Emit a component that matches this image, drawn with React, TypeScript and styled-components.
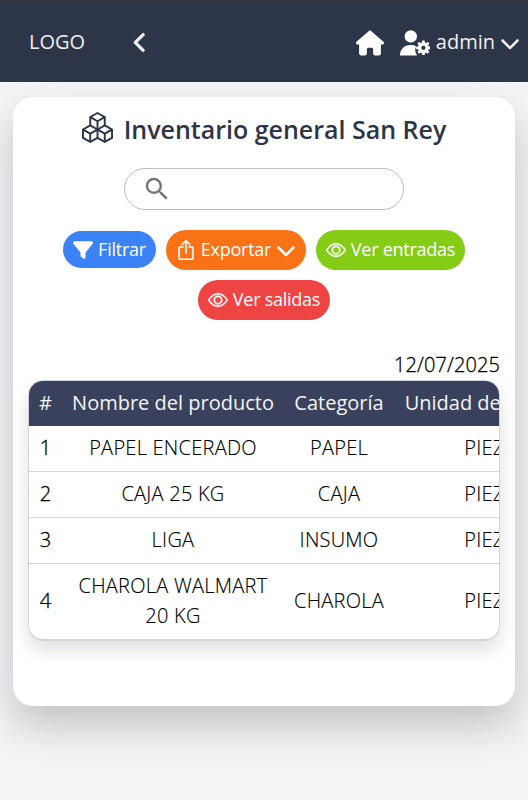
import React from "react";
import styled, { createGlobalStyle } from "styled-components";
import { FaChevronDown, FaChevronLeft, FaFilter, FaHouse } from "react-icons/fa6";
import { BsBoxArrowUp, BsBoxes, BsEye } from "react-icons/bs";
import { MdSearch } from "react-icons/md";

const GlobalStyle = createGlobalStyle`
  * { box-sizing: border-box; }
  body {
    margin: 0;
    background: #f3f4f6;
    font-family: "Open Sans", "Noto Sans", sans-serif;
    font-size: 20px;
    line-height: 30px;
    color: #000;
  }
  svg { display: block; flex: none; }
`;

const Page = styled.div`
  height: 800px;
  overflow: hidden;
`;

const Header = styled.header`
  display: flex;
  align-items: center;
  height: 82px;
  padding: 2px 8px 0 29px;
  border-top: 1px solid #3a3a3a;
  background: #2d3548;
  color: #f0f0f0;
`;

const Logo = styled.span`
  width: 101px;
  padding-bottom: 2px;
`;

const HeaderActions = styled.div`
  display: flex;
  align-items: center;
  margin-left: auto;
`;

const HomeLink = styled.a`
  margin-right: 16px;
  color: #fff;
`;

const UserMenu = styled.button`
  display: flex;
  align-items: center;
  padding: 0;
  border: 0;
  background: none;
  color: inherit;
  font: inherit;
`;

const UserName = styled.span`
  margin: 0 5px 0 6px;
  padding-bottom: 2px;
`;

const Card = styled.main`
  display: flex;
  flex-direction: column;
  align-items: center;
  height: 609px;
  margin: 15px 13px 0;
  padding: 12px 15px 0;
  border-radius: 20px;
  background: #fff;
  box-shadow: 0 20px 40px rgba(0, 0, 0, 0.2);
`;

const TitleRow = styled.div`
  display: flex;
  align-items: center;
  gap: 11px;
  height: 36px;
  color: #2d3548;
`;

const Title = styled.h1`
  margin: 0;
  padding-top: 4px;
  font-size: 25px;
  font-weight: 600;
  line-height: 36px;
`;

const SearchBox = styled.label`
  display: flex;
  align-items: center;
  width: 280px;
  height: 42px;
  margin-top: 23px;
  padding-left: 17px;
  border: 1px solid #bdbdbd;
  border-radius: 21px;
  color: #757575;
`;

const SearchInput = styled.input`
  flex: 1;
  min-width: 0;
  margin-right: 20px;
  border: 0;
  outline: 0;
  background: transparent;
  font: inherit;
`;

const Actions = styled.div`
  display: flex;
  flex-wrap: wrap;
  align-items: center;
  justify-content: center;
  gap: 10px;
  margin-top: 20px;
`;

const ActionButton = styled.button<{ $color: string; $width: number; $compact?: boolean }>`
  display: flex;
  align-items: center;
  justify-content: center;
  gap: 5px;
  width: ${(p) => p.$width}px;
  height: ${(p) => (p.$compact ? 37 : 40)}px;
  margin: ${(p) => (p.$compact ? "0 0 1px" : "0")};
  padding: ${(p) => (p.$compact ? "0" : "0 0 1px")};
  border: 0;
  border-radius: 20px;
  background: ${(p) => p.$color};
  color: #fff;
  font: 400 18px/27px "Open Sans", sans-serif;
  letter-spacing: -0.25px;
  white-space: nowrap;
`;

const OutlineIcon = styled.span`
  stroke: currentColor;
  stroke-width: 0.35px;
`;

const DateLabel = styled.div`
  align-self: stretch;
  height: 30px;
  margin-top: 30px;
  text-align: right;
  font-weight: 300;
  letter-spacing: 0.1px;
  -webkit-text-stroke: 0.3px #000;
`;

const TableFrame = styled.div`
  align-self: stretch;
  height: 260px;
  overflow: hidden;
  border: 1px solid #d1d5db;
  border-bottom-width: 1px;
  border-radius: 15px;
  box-shadow: 0 1px 0 #d1d5db, 0 10px 20px rgba(0, 0, 0, 0.13);
`;

const Table = styled.table`
  width: 650px;
  table-layout: fixed;
  border-collapse: collapse;
  text-align: center;
`;

const HeadCell = styled.th<{ $width: number }>`
  width: ${(p) => p.$width}px;
  height: 45px;
  padding: 0 0 2px;
  background: #39415c;
  color: #f3f4f6;
  font-weight: 500;
  white-space: nowrap;
`;

const Row = styled.tr`
  & + & { border-top: 1px solid #d1d5db; }
`;

const Cell = styled.td`
  padding: 7px 10px 8px;
  font-weight: 300;
  letter-spacing: 0.25px;
  -webkit-text-stroke: 0.15px #000;

  &:first-child { -webkit-text-stroke-width: 0.3px; }
`;

const gearTeeth = [0, 45, 90, 135, 180, 225, 270, 315];

function UserGearIcon() {
  return (
    <svg width="30" height="26" viewBox="0 0 30 26" fill="#fff">
      <circle cx="10.8" cy="6.4" r="6.2" />
      <path d="M0 25.5C0 19 4.8 15 10.6 15c2.2 0 4 .4 5.6 1.3-1.6 3-1.3 6.6 1 9.2Z" />
      <g transform="translate(23.4 17.8)">
        <circle r="3.8" fill="none" stroke="#fff" strokeWidth="3.4" />
        {gearTeeth.map((angle) => (
          <rect key={angle} x="-1.4" y="-7.2" width="2.8" height="3" rx=".5" transform={`rotate(${angle})`} />
        ))}
      </g>
    </svg>
  );
}

const products = [
  { name: "PAPEL ENCERADO", category: "PAPEL", unit: "PIEZA" },
  { name: "CAJA 25 KG", category: "CAJA", unit: "PIEZA" },
  { name: "LIGA", category: "INSUMO", unit: "PIEZA" },
  { name: "CHAROLA WALMART 20 KG", category: "CHAROLA", unit: "PIEZA" },
];

export default function App() {
  return (
    <Page>
      <GlobalStyle />
      <Header>
        <Logo>LOGO</Logo>
        <FaChevronLeft size={21} stroke="currentColor" strokeWidth={20} />
        <HeaderActions>
          <HomeLink><FaHouse size={28} /></HomeLink>
          <UserMenu>
            <UserGearIcon />
            <UserName>admin</UserName>
            <FaChevronDown size={20} />
          </UserMenu>
        </HeaderActions>
      </Header>
      <Card>
        <TitleRow>
          <BsBoxes size={31} />
          <Title>Inventario general San Rey</Title>
        </TitleRow>
        <SearchBox>
          <MdSearch size={30} />
          <SearchInput aria-label="Buscar" />
        </SearchBox>
        <Actions>
          <ActionButton $color="#3b82f6" $width={93} $compact>
            <FaFilter size={20} />Filtrar
          </ActionButton>
          <ActionButton $color="#f97316" $width={140}>
            <OutlineIcon as={BsBoxArrowUp} size={20} />Exportar<FaChevronDown size={20} />
          </ActionButton>
          <ActionButton $color="#84cc16" $width={149}>
            <OutlineIcon as={BsEye} size={20} />Ver entradas
          </ActionButton>
          <ActionButton $color="#ef4444" $width={132}>
            <OutlineIcon as={BsEye} size={20} />Ver salidas
          </ActionButton>
        </Actions>
        <DateLabel>12/07/2025</DateLabel>
        <TableFrame>
          <Table>
            <thead>
              <tr>
                <HeadCell $width={33}>#</HeadCell>
                <HeadCell $width={222}>Nombre del producto</HeadCell>
                <HeadCell $width={110}>Categoría</HeadCell>
                <HeadCell $width={193}>Unidad de medida</HeadCell>
                <HeadCell $width={92}>Stock</HeadCell>
              </tr>
            </thead>
            <tbody>
              {products.map((product, index) => (
                <Row key={product.name}>
                  <Cell>{index + 1}</Cell>
                  <Cell>{product.name}</Cell>
                  <Cell>{product.category}</Cell>
                  <Cell>{product.unit}</Cell>
                  <Cell />
                </Row>
              ))}
            </tbody>
          </Table>
        </TableFrame>
      </Card>
    </Page>
  );
}
